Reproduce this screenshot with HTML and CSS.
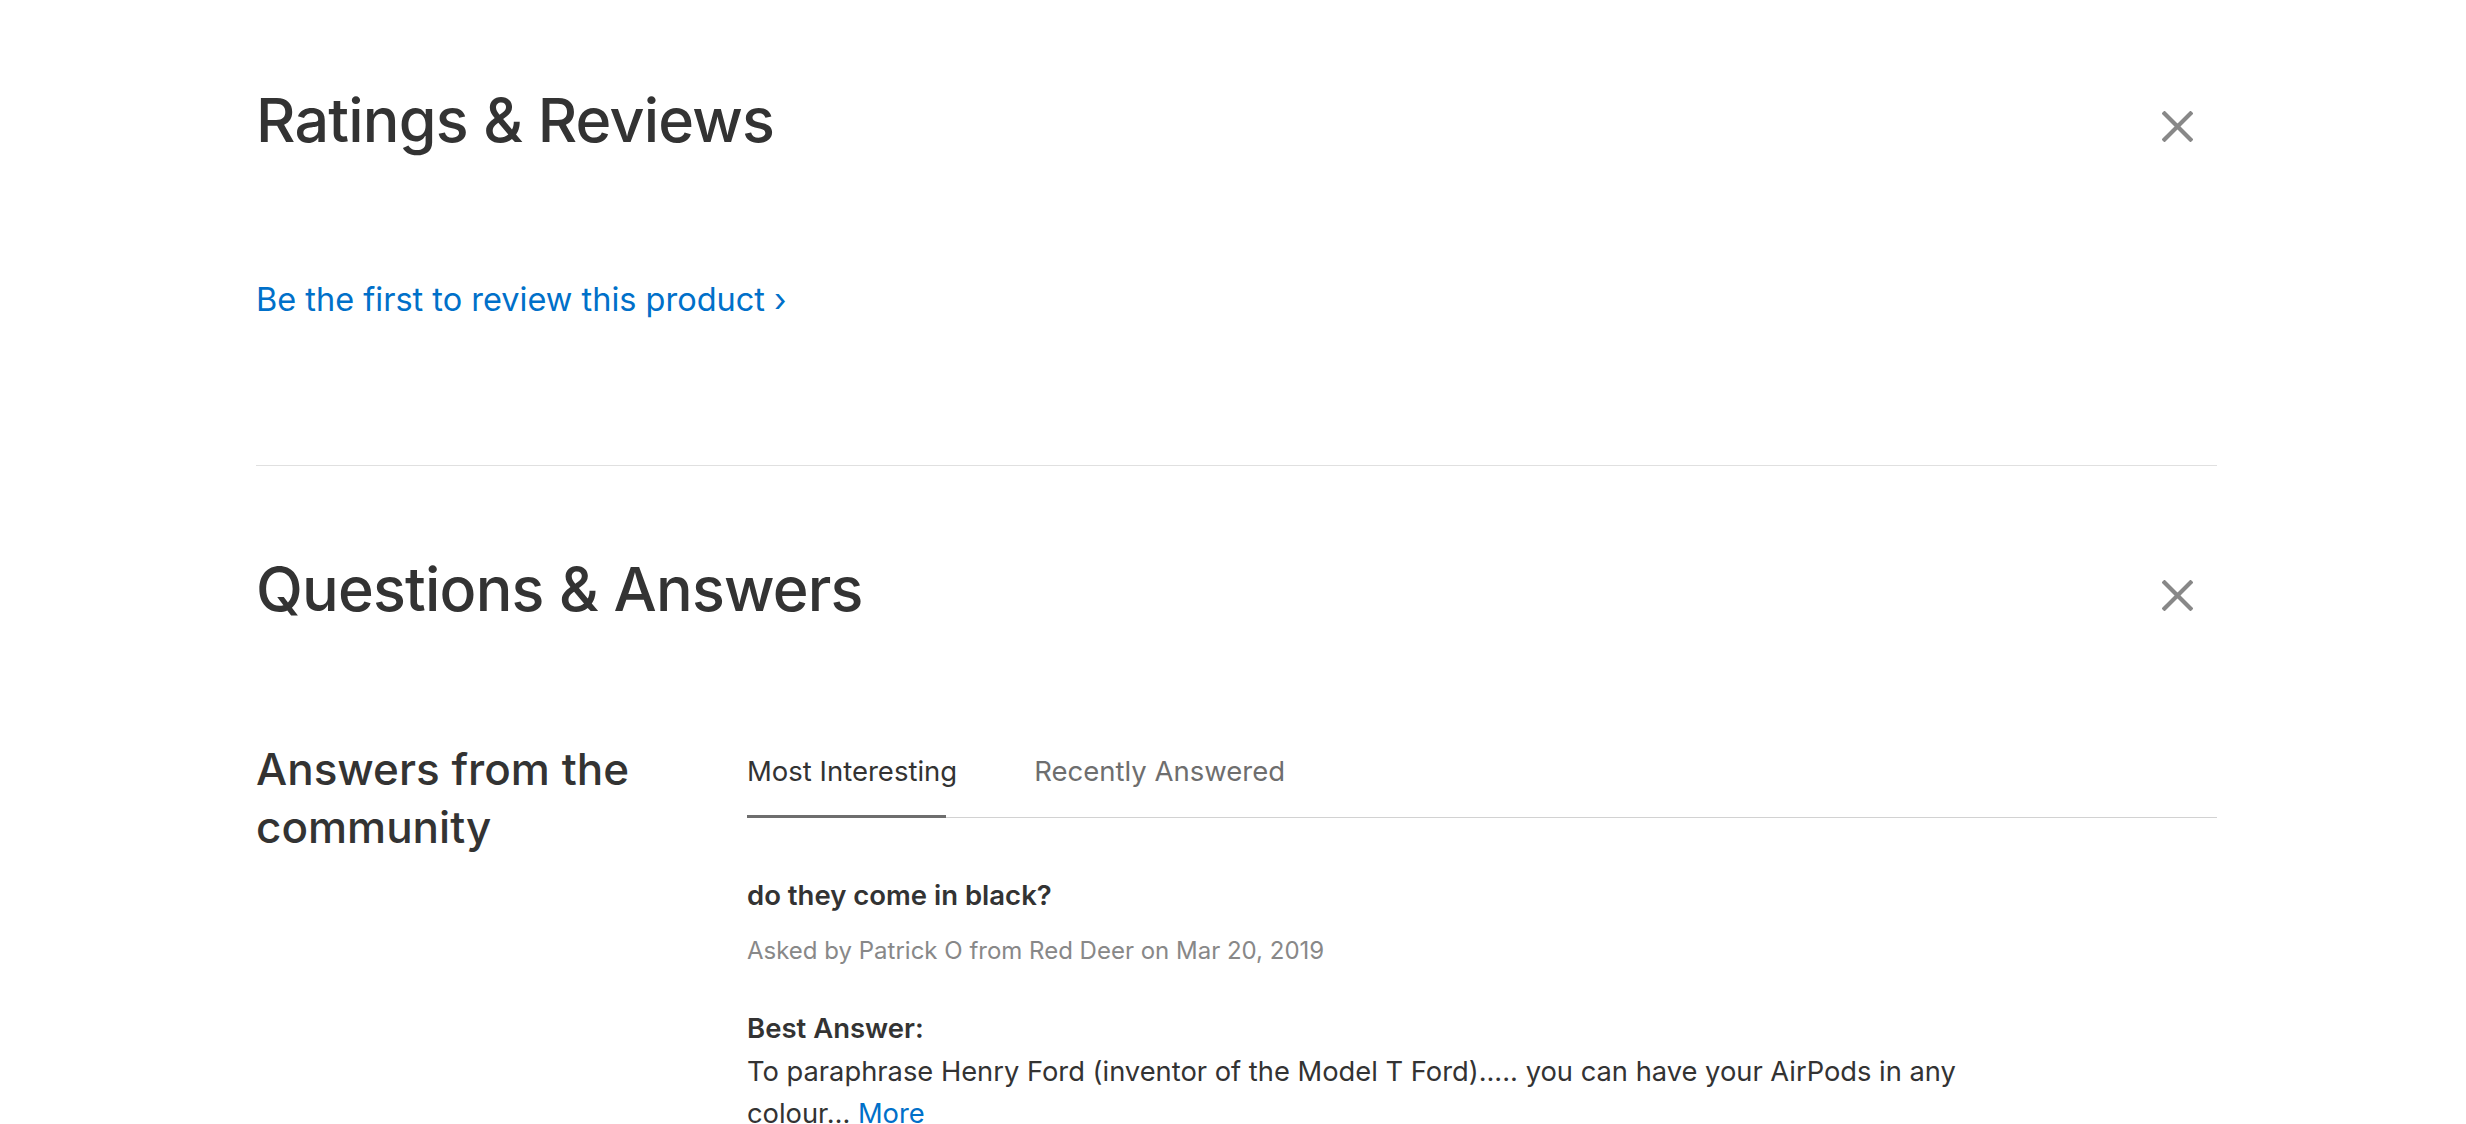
FILE: index.html
```html
<!DOCTYPE html>
<html lang="en">
<head>
<meta charset="utf-8">
<title>Ratings &amp; Reviews</title>
<link rel="stylesheet" href="styles.css">
</head>
<body>
<main class="page">
  <section class="section">
    <div class="section-head">
      <h2 class="section-title">Ratings &amp; Reviews</h2>
      <button class="close" aria-label="Close">
        <svg viewBox="0 0 31 31" width="31" height="31"><path d="M2.5 2.5 L28.5 28.5 M28.5 2.5 L2.5 28.5" stroke="#888" stroke-width="4.2" stroke-linecap="square" fill="none"/></svg>
      </button>
    </div>
    <a class="first-review" href="#">Be the first to review this product ›</a>
  </section>

  <hr class="divider">

  <section class="section qa">
    <div class="section-head">
      <h2 class="section-title">Questions &amp; Answers</h2>
      <button class="close" aria-label="Close">
        <svg viewBox="0 0 31 31" width="31" height="31"><path d="M2.5 2.5 L28.5 28.5 M28.5 2.5 L2.5 28.5" stroke="#888" stroke-width="4.2" stroke-linecap="square" fill="none"/></svg>
      </button>
    </div>

    <div class="qa-grid">
      <h3 class="qa-side">Answers from the community</h3>
      <div class="qa-main">
        <div class="tabs">
          <span class="tab active">Most Interesting</span>
          <span class="tab">Recently Answered</span>
        </div>
        <div class="question">
          <p class="q-title">do they come in black?</p>
          <p class="q-meta">Asked by Patrick O from Red Deer on Mar 20, 2019</p>
          <p class="a-label">Best Answer:</p>
          <p class="a-text">To paraphrase Henry Ford (inventor of the Model T Ford)..... you can have your AirPods in any colour… <a class="more" href="#">More</a></p>
        </div>
      </div>
    </div>
  </section>
</main>
</body>
</html>
```

FILE: styles.css
```css
* { box-sizing: border-box; }

html, body {
  margin: 0;
  padding: 0;
  background: #fff;
}

body {
  font-family: Inter, "Noto Sans", "Liberation Sans", sans-serif;
  color: #333;
}

.page {
  width: 1961px;
  margin-left: 256px;
  padding-top: 82px;
}

.section-head {
  display: flex;
  justify-content: space-between;
  align-items: center;
}

.section-title {
  margin: 0;
  font-size: 61px;
  line-height: 76px;
  font-weight: 500;
  letter-spacing: -0.8px;
  color: #333;
}

.close {
  border: 0;
  background: none;
  padding: 0;
  margin: 12px 24px 0 0;
  width: 31px;
  height: 31px;
  display: flex;
}

.first-review {
  display: inline-block;
  margin-top: 123px;
  font-size: 32.5px;
  line-height: 37px;
  color: #0070c9;
  text-decoration: none;
}

.divider {
  border: 0;
  border-top: 1px solid #e0e0e0;
  margin: 147px 0 0 0;
  height: 0;
}

.qa {
  padding-top: 85px;
}

.qa-grid {
  display: grid;
  grid-template-columns: 491px 1fr;
  margin-top: 112px;
  align-items: start;
}

.qa-side {
  margin: 0;
  padding-top: 1px;
  font-size: 44px;
  line-height: 58px;
  font-weight: 500;
  width: 420px;
  color: #333;
}

.tabs {
  display: flex;
  gap: 77px;
  border-bottom: 1px solid #d2d2d2;
}

.tab {
  position: relative;
  font-size: 27.5px;
  line-height: 33px;
  padding: 16px 0 29px;
  color: #6e6e6e;
}

.tab.active {
  color: #333;
}

.tab.active::after {
  content: "";
  position: absolute;
  left: 0;
  right: 11px;
  bottom: -1px;
  height: 3px;
  background: #6e6e6e;
}

.question p {
  margin: 0;
  font-size: 27.3px;
  line-height: 42px;
}

.question .q-title {
  margin-top: 56px;
  font-size: 27.5px;
  font-weight: 600;
}

.question .q-meta {
  margin-top: 17px;
  font-size: 24px;
  line-height: 36px;
  color: #888;
}

.question .a-label {
  margin-top: 38px;
  font-size: 27.5px;
  font-weight: 600;
}

.question .a-text {
  margin-top: 2px;
  max-width: 1260px;
}

.more {
  color: #0070c9;
  text-decoration: none;
}
```
